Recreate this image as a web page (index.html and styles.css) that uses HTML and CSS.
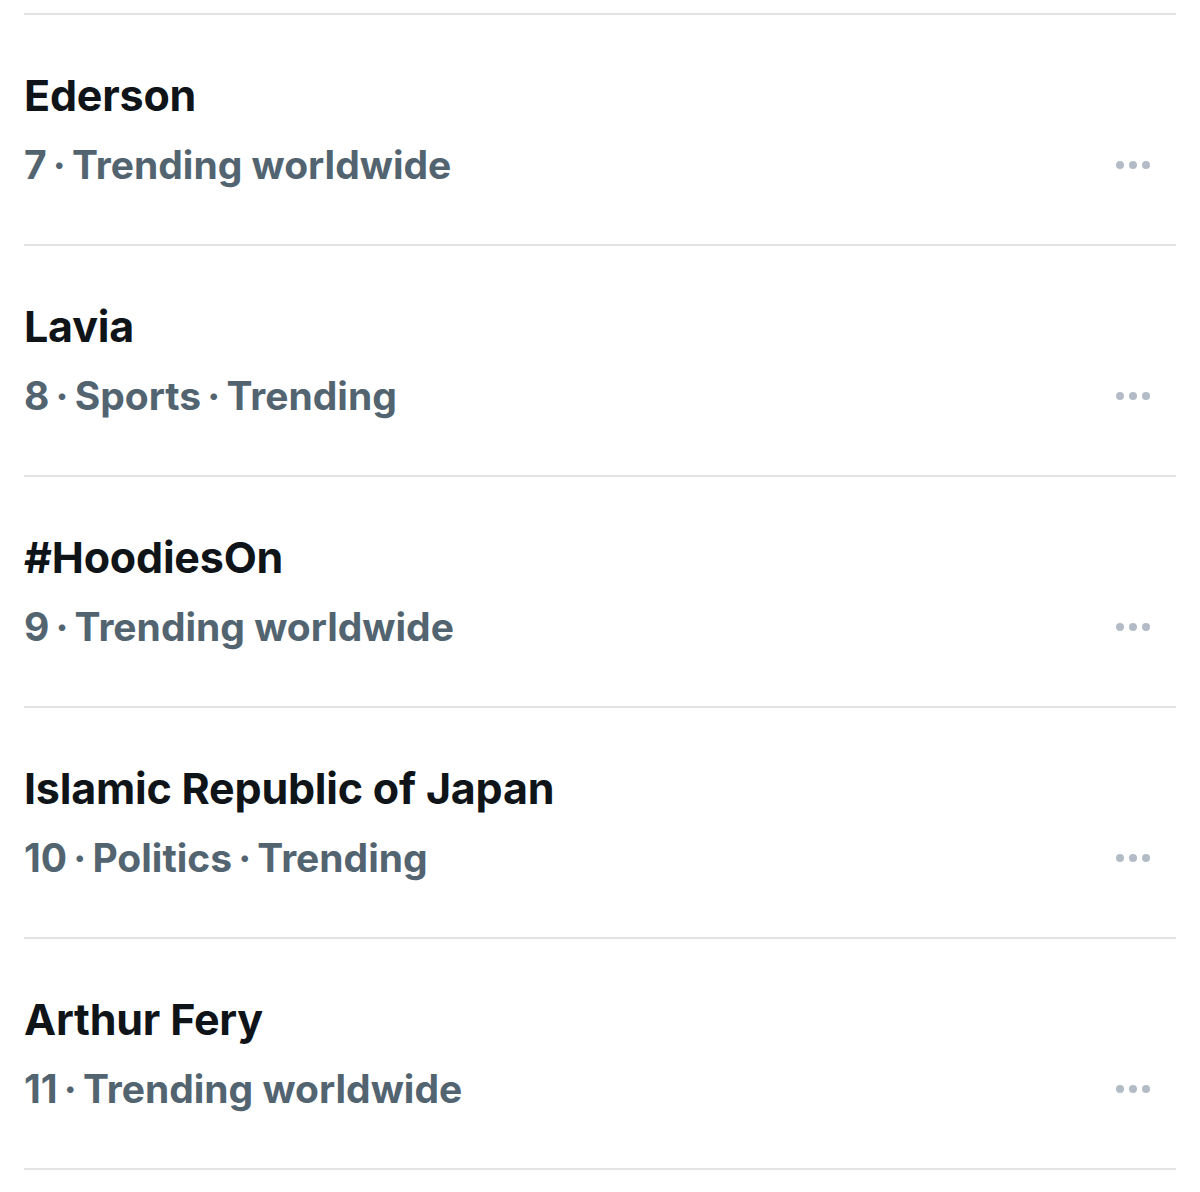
FILE: index.html
```html
<!DOCTYPE html>
<html lang="en">
<head>
    <meta charset="UTF-8">
    <meta name="viewport" content="width=device-width, initial-scale=1.0">
    <title>Trends</title>
    <link rel="stylesheet" href="styles.css">
</head>
<body>
    <ul class="trends">
        <li class="trend">
            <div class="trend-name">Ederson</div>
            <div class="trend-meta">
                <span>7&thinsp;·&thinsp;Trending worldwide</span>
                <span class="more"><i></i><i></i><i></i></span>
            </div>
        </li>
        <li class="trend">
            <div class="trend-name">Lavia</div>
            <div class="trend-meta">
                <span>8&thinsp;·&thinsp;Sports&thinsp;·&thinsp;Trending</span>
                <span class="more"><i></i><i></i><i></i></span>
            </div>
        </li>
        <li class="trend">
            <div class="trend-name">#HoodiesOn</div>
            <div class="trend-meta">
                <span>9&thinsp;·&thinsp;Trending worldwide</span>
                <span class="more"><i></i><i></i><i></i></span>
            </div>
        </li>
        <li class="trend">
            <div class="trend-name">Islamic Republic of Japan</div>
            <div class="trend-meta">
                <span>10&thinsp;·&thinsp;Politics&thinsp;·&thinsp;Trending</span>
                <span class="more"><i></i><i></i><i></i></span>
            </div>
        </li>
        <li class="trend">
            <div class="trend-name">Arthur Fery</div>
            <div class="trend-meta">
                <span>11&thinsp;·&thinsp;Trending worldwide</span>
                <span class="more"><i></i><i></i><i></i></span>
            </div>
        </li>
    </ul>
</body>
</html>
```

FILE: styles.css
```css
body {
    margin: 0;
    padding: 13px 24px 0;
    background: #fff;
    font-family: Inter, "Noto Sans", sans-serif;
}
.trends {
    list-style: none;
    margin: 0;
    padding: 0;
    border-bottom: 2px solid #e3e3e3;
}
.trend {
    box-sizing: border-box;
    height: 231px;
    padding: 56px 0 0 0;
    border-top: 2px solid #e3e3e3;
}
.trend-name {
    font-size: 43px;
    line-height: 48px;
    font-weight: 700;
    letter-spacing: -0.2px;
    color: #0f1419;
}
.trend-meta {
    display: flex;
    justify-content: space-between;
    align-items: center;
    margin-top: 22px;
    font-size: 39px;
    line-height: 48px;
    font-weight: 700;
    letter-spacing: 0;
    color: #536471;
}
.more {
    display: flex;
    gap: 5px;
    margin-right: 26px;
}
.more i {
    width: 8px;
    height: 8px;
    border-radius: 50%;
    background: #b3bcc6;
}
```
